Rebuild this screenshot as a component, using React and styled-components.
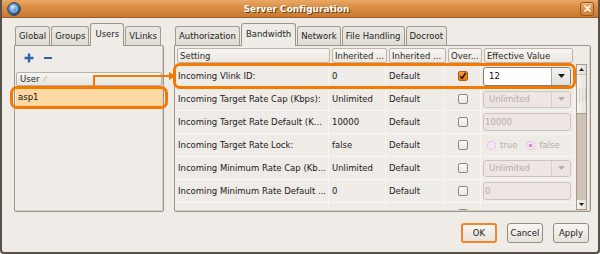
import React from 'react';
import styled, { createGlobalStyle, css } from 'styled-components';

const GlobalStyle = createGlobalStyle`
html, body {
  margin: 0;
  padding: 0;
  background: #efebe7;
}

body {
  font-family: "DejaVu Sans", "Liberation Sans", sans-serif;
  font-size: 8.5px;
  color: #1a1a1a;
}

* {
  box-sizing: border-box;
}
`;

const userTabs = ['Global', 'Groups', 'Users', 'VLinks'];
const settingTabs = ['Authorization', 'Bandwidth', 'Network', 'File Handling', 'Docroot'];
const columns = ['Setting', 'Inherited ...', 'Inherited ...', 'Over...', 'Effective Value'];

const settings = [
  { name: 'Incoming Vlink ID:', inherited: '0', kind: 'comboEntry', value: '12', override: true },
  { name: 'Incoming Target Rate Cap (Kbps):', inherited: 'Unlimited', kind: 'combo', value: 'Unlimited' },
  { name: 'Incoming Target Rate Default (K...', inherited: '10000', kind: 'entry', value: '10000' },
  { name: 'Incoming Target Rate Lock:', inherited: 'false', kind: 'radio' },
  { name: 'Incoming Minimum Rate Cap (Kb...', inherited: 'Unlimited', kind: 'combo', value: 'Unlimited' },
  { name: 'Incoming Minimum Rate Default ...', inherited: '0', kind: 'entry', value: '0' },
  { name: 'Incoming Minimum Rate Lock:', inherited: 'false', kind: 'radio' },
];

const DownArrow = ({ color }) => (
  <svg width="7" height="4" viewBox="0 0 7 4">
    <path d="M0 0 H7 L3.5 4 Z" fill={color} />
  </svg>
);

const EffectiveValue = ({ kind, value }) => {
  if (kind === 'comboEntry') {
    return (
      <Combo $active>
        <ComboText>{value}</ComboText>
        <ComboButton $active>
          <DownArrow color="#1a1a1a" />
        </ComboButton>
      </Combo>
    );
  }
  if (kind === 'combo') {
    return (
      <Combo>
        <ComboText>{value}</ComboText>
        <ComboButton>
          <DownArrow color="#b9aeab" />
        </ComboButton>
      </Combo>
    );
  }
  if (kind === 'entry') {
    return <Entry>{value}</Entry>;
  }
  return (
    <RadioGroup>
      <RadioOption>
        <Radio />
        true
      </RadioOption>
      <RadioOption>
        <Radio $checked />
        false
      </RadioOption>
    </RadioGroup>
  );
};

const App = () => {
  return (
    <>
      <GlobalStyle />
      <Window>
        <TitleBar>
          <AppIcon>
            <svg width="14" height="14" viewBox="0 0 14 14">
              <defs>
                <radialGradient id="globe" cx="40%" cy="35%" r="65%">
                  <stop offset="0%" stopColor="#d9ecfb" />
                  <stop offset="45%" stopColor="#5a9ad6" />
                  <stop offset="100%" stopColor="#1d4f86" />
                </radialGradient>
              </defs>
              <circle cx="7" cy="7" r="6.3" fill="url(#globe)" stroke="#2b3a4a" strokeWidth="1" />
              <circle cx="7" cy="7" r="3" fill="none" stroke="#e9f4ff" strokeWidth="0.8" opacity="0.7" />
            </svg>
          </AppIcon>
          <Title>Server Configuration</Title>
          <CloseButton>
            <svg width="7" height="7" viewBox="0 0 7 7">
              <path d="M1 1 L6 6 M6 1 L1 6" stroke="#ffffff" strokeWidth="1.6" strokeLinecap="round" />
            </svg>
          </CloseButton>
        </TitleBar>

        <Body>
          <Panes>
            <Notebook $width="150px">
              <TabStrip>
                {userTabs.map((tab) => (
                  <Tab key={tab} $active={tab === 'Users'}>
                    {tab}
                  </Tab>
                ))}
              </TabStrip>
              <Page>
                <Toolbar>
                  <ToolIcon>
                    <svg width="10" height="10" viewBox="0 0 10 10">
                      <path d="M5 0.5 V9.5 M0.5 5 H9.5" stroke="#2f64a8" strokeWidth="2.4" />
                    </svg>
                  </ToolIcon>
                  <ToolIcon>
                    <svg width="10" height="10" viewBox="0 0 10 10">
                      <path d="M1 5 H9" stroke="#2f64a8" strokeWidth="2.2" />
                    </svg>
                  </ToolIcon>
                </Toolbar>
                <Tree>
                  <TreeHeader>
                    User <SortMark>⁄</SortMark>
                  </TreeHeader>
                  <TreeRow $selected>
                    asp1
                    <Highlight $inset="-2px -6px -3px -6px" />
                  </TreeRow>
                </Tree>
              </Page>
            </Notebook>

            <Notebook $width="417px">
              <TabStrip>
                {settingTabs.map((tab) => (
                  <Tab key={tab} $active={tab === 'Bandwidth'}>
                    {tab}
                  </Tab>
                ))}
              </TabStrip>
              <SettingsPage>
                <HeaderRow>
                  {columns.map((col, i) => (
                    <HeaderCell key={i}>{col}</HeaderCell>
                  ))}
                </HeaderRow>
                <TableBody>
                  <Rows>
                    {settings.map((s) => (
                      <Row key={s.name}>
                        <Cell>{s.name}</Cell>
                        <Cell>{s.inherited}</Cell>
                        <Cell>Default</Cell>
                        <Cell $center>
                          <Checkbox $checked={s.override}>
                            {s.override && (
                              <svg width="8" height="8" viewBox="0 0 8 8">
                                <path d="M1.2 4.2 L3.2 6.3 L6.8 0.8" stroke="#2a1a0a" strokeWidth="1.6" fill="none" />
                              </svg>
                            )}
                          </Checkbox>
                        </Cell>
                        <Cell $widget>
                          <EffectiveValue kind={s.kind} value={s.value} />
                        </Cell>
                      </Row>
                    ))}
                  </Rows>
                  <Scrollbar>
                    <ScrollArrow>
                      <svg width="5" height="3" viewBox="0 0 5 3">
                        <path d="M0 3 H5 L2.5 0 Z" fill="#1a1a1a" />
                      </svg>
                    </ScrollArrow>
                    <Slider />
                    <Trough />
                    <ScrollArrow>
                      <svg width="5" height="3" viewBox="0 0 5 3">
                        <path d="M0 0 H5 L2.5 3 Z" fill="#1a1a1a" />
                      </svg>
                    </ScrollArrow>
                  </Scrollbar>
                  <Highlight $inset="-1px auto auto -2px" $width="403px" $height="26px" />
                </TableBody>
              </SettingsPage>
            </Notebook>
          </Panes>

          <ButtonBar>
            <DialogButton $default>OK</DialogButton>
            <DialogButton>Cancel</DialogButton>
            <DialogButton>Apply</DialogButton>
          </ButtonBar>
        </Body>

        <Connector width="84" height="16" viewBox="0 0 84 16">
          <path d="M1 14 V4 H76" stroke="#f57900" strokeWidth="2" fill="none" />
          <path d="M76 0 L83 4 L76 8 Z" fill="#f57900" />
        </Connector>
      </Window>
    </>
  );
};

export default App;

const orange = '#f57900';

const Window = styled.div`
  position: relative;
  width: 600px;
  height: 254px;
  display: flex;
  flex-direction: column;
  background: #efebe7;
  border-left: 2px solid #57514a;
  border-right: 2px solid #57514a;
  border-bottom: 2px solid #57514a;
  border-radius: 0 0 4px 4px;
  overflow: hidden;
`;

const TitleBar = styled.div`
  height: 18px;
  margin: 0 -2px;
  display: flex;
  align-items: center;
  position: relative;
  background: linear-gradient(#eaa865, #d98d42 45%, #c97a30);
  border-bottom: 1px solid #9a5c22;
`;

const AppIcon = styled.div`
  width: 14px;
  height: 14px;
  margin-left: 7px;
  display: flex;
`;

const Title = styled.div`
  flex: 1;
  text-align: center;
  font-weight: bold;
  font-size: 8.8px;
  color: #ffffff;
  text-shadow: 1px 1px 0 #6e3f12;
  letter-spacing: 0.1px;
  padding-right: 8px;
`;

const CloseButton = styled.div`
  width: 14px;
  height: 14px;
  margin-right: 6px;
  display: flex;
  align-items: center;
  justify-content: center;
  border: 1px solid #93521c;
  border-radius: 3px;
  background: linear-gradient(#eda567, #d1823a);
  box-shadow: inset 0 1px 0 rgba(255, 255, 255, 0.35);
`;

const Body = styled.div`
  flex: 1;
  display: flex;
  flex-direction: column;
  padding: 5px 7px 0 12px;
`;

const Panes = styled.div`
  display: flex;
  gap: 10px;
`;

const Notebook = styled.div`
  width: ${(p) => p.$width};
  display: flex;
  flex-direction: column;
`;

const TabStrip = styled.div`
  height: 22px;
  display: flex;
  align-items: flex-end;
  gap: 1px;
  padding-left: 1px;
  position: relative;
  z-index: 1;
`;

const Tab = styled.div`
  height: 19px;
  padding: 0 3px;
  display: flex;
  align-items: center;
  white-space: nowrap;
  border: 1px solid #a29a8f;
  border-bottom: none;
  border-radius: 3px 3px 0 0;
  background: linear-gradient(#ebe7e2, #e1dcd5);
  color: #1f1f1f;

  ${(p) =>
    p.$active &&
    css`
      height: 23px;
      margin-bottom: -1px;
      padding: 0 4px 3px;
      background: #efebe7;
      border-color: #9d958a;
    `}
`;

const Page = styled.div`
  height: 167px;
  border: 1px solid #9d958a;
  box-shadow: inset -1px -1px 0 #d5cfc7;
  border-radius: 0 2px 2px 2px;
  display: flex;
  flex-direction: column;
  padding: 0 1px 1px 1px;
`;

const Toolbar = styled.div`
  height: 25px;
  display: flex;
  align-items: center;
  gap: 9px;
  padding: 0 0 2px 8px;
`;

const ToolIcon = styled.div`
  width: 10px;
  height: 10px;
  display: flex;
`;

const Tree = styled.div`
  flex: 1;
  display: flex;
  flex-direction: column;
  padding-top: 1px;
`;

const TreeHeader = styled.div`
  height: 14px;
  display: flex;
  align-items: center;
  gap: 5px;
  padding-left: 3px;
  border: 1px solid #b9b1a6;
  border-radius: 2px;
  background: linear-gradient(#f6f4f1, #e9e5df);
  color: #2a2a2a;
`;

const SortMark = styled.span`
  color: #8a847c;
  font-size: 7px;
`;

const TreeRow = styled.div`
  position: relative;
  height: 18px;
  margin-top: 2px;
  display: flex;
  align-items: center;
  padding-left: 2px;
  background: ${(p) => (p.$selected ? '#fdd8a3' : 'transparent')};
  color: #111111;
`;

const Highlight = styled.div`
  position: absolute;
  inset: ${(p) => p.$inset};
  width: ${(p) => p.$width || 'auto'};
  height: ${(p) => p.$height || 'auto'};
  border: 3px solid ${orange};
  border-radius: 7px;
  pointer-events: none;
`;

const SettingsPage = styled(Page)`
  padding: 2px 3px 1px 0;
`;

const HeaderRow = styled.div`
  display: grid;
  grid-template-columns: 155px 57px 59px 36px 91px;
  gap: 0;
  height: 15px;
  padding-left: 2px;
`;

const HeaderCell = styled.div`
  margin-right: 2px;
  display: flex;
  align-items: center;
  padding-left: 2px;
  white-space: nowrap;
  overflow: hidden;
  border: 1px solid #bdb5aa;
  border-radius: 2px;
  background: linear-gradient(#f7f5f2, #ebe7e1);
  color: #2a2a2a;
`;

const TableBody = styled.div`
  position: relative;
  flex: 1;
  display: flex;
  margin-top: 1px;
  min-height: 0;
`;

const Rows = styled.div`
  width: 400px;
  overflow: hidden;
`;

const Row = styled.div`
  height: 23px;
  display: grid;
  grid-template-columns: 154px 57px 59px 36px 94px;
  border-bottom: 1px solid #f8f6f4;
  &:first-child {
    margin-top: 1px;
  }
`;

const Cell = styled.div`
  display: flex;
  align-items: center;
  justify-content: ${(p) => (p.$center ? 'center' : 'flex-start')};
  padding-left: ${(p) => (p.$center ? '0' : p.$widget ? '2px' : '3px')};
  padding-right: ${(p) => (p.$widget ? '3px' : '0')};
  white-space: nowrap;
  overflow: hidden;
  border-right: 1px solid #f8f6f4;
`;

const Checkbox = styled.div`
  width: 10px;
  height: 10px;
  display: flex;
  align-items: center;
  justify-content: center;
  border: 1px solid ${(p) => (p.$checked ? '#b85a00' : '#8d867d')};
  border-radius: 2px;
  background: ${(p) => (p.$checked ? 'linear-gradient(#f79a45, #e8730a)' : 'linear-gradient(#fbfaf8, #ece8e3)')};
`;

const Combo = styled.div`
  width: 88px;
  height: ${(p) => (p.$active ? '19px' : '17px')};
  display: flex;
  border: 1px solid ${(p) => (p.$active ? '#857d72' : '#cdc3bf')};
  border-radius: 3px;
  background: ${(p) => (p.$active ? '#ffffff' : '#eee6e4')};
  color: ${(p) => (p.$active ? '#111111' : '#b7aca8')};
  overflow: hidden;
`;

const ComboText = styled.div`
  flex: 1;
  display: flex;
  align-items: center;
  padding-left: 5px;
`;

const ComboButton = styled.div`
  width: 19px;
  display: flex;
  align-items: center;
  justify-content: center;
  border-left: 1px solid ${(p) => (p.$active ? '#b0a89d' : '#d8cfcb')};
  background: ${(p) => (p.$active ? 'linear-gradient(#f5f3f0, #e3dfd9)' : '#ede5e3')};
`;

const Entry = styled.div`
  width: 88px;
  height: 18px;
  display: flex;
  align-items: center;
  padding-left: 1px;
  border: 1px solid #cdc3bf;
  border-radius: 3px;
  background: #eee6e4;
  color: #b7aca8;
`;

const RadioGroup = styled.div`
  display: flex;
  gap: 9px;
  padding-left: 4px;
  color: #b7aca8;
`;

const RadioOption = styled.div`
  display: flex;
  align-items: center;
  gap: 4px;
`;

const Radio = styled.div`
  width: 9px;
  height: 9px;
  border-radius: 50%;
  border: 1px dotted #e293dc;
  background: ${(p) => (p.$checked ? 'radial-gradient(circle, #c98fc4 0 1.6px, #f3eaf1 2px)' : '#f3eaf1')};
`;

const Scrollbar = styled.div`
  width: 11px;
  margin-left: 1px;
  display: flex;
  flex-direction: column;
  border: 1px solid #a49c91;
  background: #cdc2b3;
`;

const ScrollArrow = styled.div`
  height: 9px;
  display: flex;
  align-items: center;
  justify-content: center;
  background: linear-gradient(90deg, #f4f2ef, #e4e0da);
`;

const Slider = styled.div`
  height: 40px;
  border-top: 1px solid #c7c0b6;
  border-bottom: 1px solid #a49c91;
  background:
    repeating-linear-gradient(90deg, transparent 0 2px, rgba(190, 182, 172, 0.5) 2px 3px),
    linear-gradient(90deg, #f6f4f1, #e8e4de);
  background-size: 100% 14px, 100% 100%;
  background-position: 0 13px, 0 0;
  background-repeat: no-repeat;
`;

const Trough = styled.div`
  flex: 1;
`;

const ButtonBar = styled.div`
  display: flex;
  justify-content: flex-end;
  gap: 10px;
  margin-top: 11px;
  padding-right: 2px;
`;

const DialogButton = styled.div`
  width: 36px;
  height: 20px;
  display: flex;
  align-items: center;
  justify-content: center;
  border: 1px solid #948c81;
  border-radius: 3px;
  background: linear-gradient(#f8f6f4, #e6e2dc);
  color: #1a1a1a;

  ${(p) =>
    p.$default &&
    css`
      border: 2px solid #f0862a;
    `}
`;

const Connector = styled.svg`
  position: absolute;
  left: 91px;
  top: 72px;
  pointer-events: none;
`;
